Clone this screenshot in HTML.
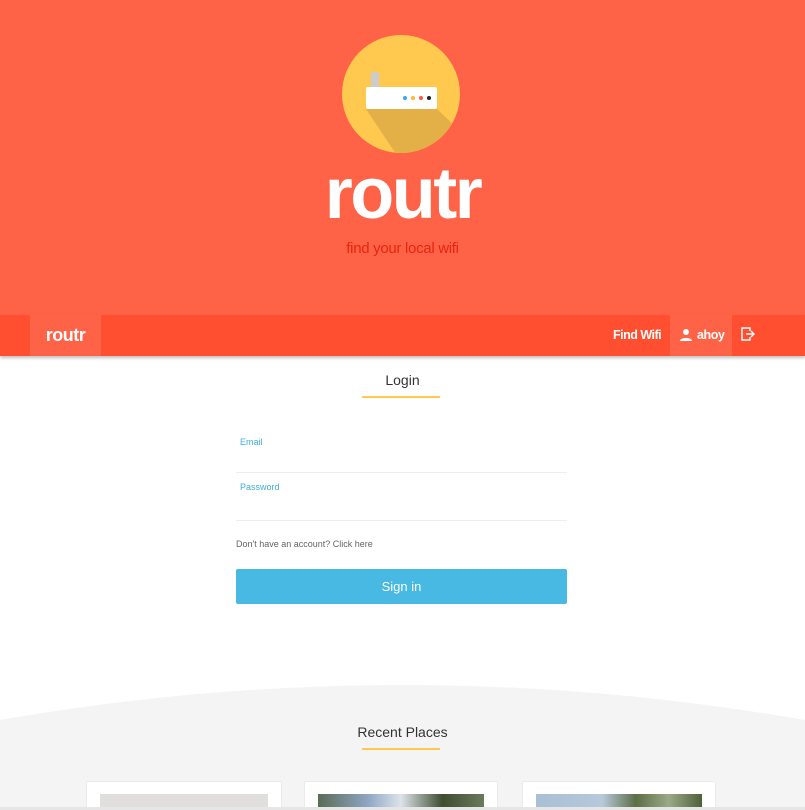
<!DOCTYPE html>
<html><head><style>
*{margin:0;padding:0;box-sizing:border-box}
html,body{width:805px;height:810px;overflow:hidden}
body{background:#fff;font-family:"Liberation Sans",sans-serif;position:relative}
.hero{position:absolute;left:0;top:0;width:805px;height:315px;background:#FF6347}
.title{position:absolute;left:0;width:805px;top:153px;text-align:center;color:#fff;font-weight:bold;font-size:72px;letter-spacing:-2.5px}
.sub{position:absolute;left:0;width:805px;top:240px;text-align:center;color:#E8250E;font-size:15px;letter-spacing:-0.3px}
.nav{position:absolute;left:0;top:315px;width:805px;height:41px;background:#FF4F30;box-shadow:0 2px 3px rgba(0,0,0,.25);color:#fff;font-weight:bold}
.brand{position:absolute;left:30px;top:0;width:71px;height:41px;background:#FF6347;text-align:center;line-height:41px;font-size:18px;letter-spacing:-0.5px}
.fw{position:absolute;left:613px;top:0;line-height:41px;font-size:12.5px;letter-spacing:-0.5px}
.ahoy{position:absolute;left:670px;top:0;width:62px;height:41px;background:#FF6347;line-height:41px;font-size:12.5px;padding-left:27px;letter-spacing:-0.4px}
.h2{position:absolute;left:0;width:805px;text-align:center;color:#333;font-size:14px}
.bar{position:absolute;left:362px;width:78px;height:2px;background:#FFC84F}
.lbl{position:absolute;left:240px;color:#3EAEDC;font-size:9px}
.line{position:absolute;left:236px;width:331px;height:1px;background:#eee}
.btn{position:absolute;left:236px;top:569px;width:331px;height:35px;background:#47B9E2;color:#fff;text-align:center;line-height:35px;font-size:13px;border-radius:2px}
.card{position:absolute;top:781px;height:26px;background:#fff;border:1px solid #eaeaea;border-bottom:none;border-radius:2px 2px 0 0;overflow:hidden}
.img{position:absolute;top:12px;left:13px;right:13px;height:40px}
</style></head><body>
<div class="hero">
<svg width="805" height="315" style="position:absolute;left:0;top:0">
<defs><clipPath id="c"><circle cx="401" cy="94" r="59"/></clipPath></defs>
<circle cx="401" cy="94" r="59" fill="#FFC84F"/>
<polygon points="366,109 437,109 480,150 420,170 400,160" fill="#E3B048" clip-path="url(#c)"/>
<rect x="371" y="72" width="8" height="18" rx="2" fill="#ccc"/>
<rect x="366" y="87" width="71" height="22" rx="2" fill="#fff"/>
<circle cx="405" cy="98" r="2" fill="#3AA9E0"/>
<circle cx="413" cy="98" r="2" fill="#FFB830"/>
<circle cx="421" cy="98" r="2" fill="#FF5A3A"/>
<circle cx="429" cy="98" r="2" fill="#222"/>
</svg>
<div class="title">routr</div>
<div class="sub">find your local wifi</div>
</div>
<div class="nav">
<div class="brand">routr</div>
<div class="fw">Find Wifi</div>
<div class="ahoy">ahoy</div>
<svg width="14" height="14" style="position:absolute;left:679px;top:13px" viewBox="0 0 14 14"><circle cx="7" cy="4" r="3" fill="#fff"/><path d="M1 13c0-4 12-4 12 0z" fill="#fff"/></svg>
<svg width="14" height="14" style="position:absolute;left:741px;top:12px" viewBox="0 0 14 14" fill="none" stroke="#fff" stroke-width="1.4"><path d="M9 4V1H1v12h8v-3M5 7h8M10 4l3 3-3 3"/></svg>
</div>
<div class="h2" style="top:372px">Login</div>
<div class="bar" style="top:396px"></div>
<div class="lbl" style="top:437px">Email</div>
<div class="line" style="top:472px"></div>
<div class="lbl" style="top:482px">Password</div>
<div class="line" style="top:520px"></div>
<div style="position:absolute;left:236px;top:539px;font-size:9px;color:#666">Don't have an account? Click here</div>
<div class="btn">Sign in</div>
<svg width="805" height="130" style="position:absolute;left:0;top:680px"><path d="M0 40 Q402 -30 805 40 V130 H0z" fill="#f4f4f4"/></svg>
<div class="h2" style="top:724px">Recent Places</div>
<div class="bar" style="top:748px"></div>
<div class="card" style="left:86px;width:196px"><div class="img" style="background:#e0dfdb"></div></div>
<div class="card" style="left:304px;width:194px"><div class="img" style="background:linear-gradient(90deg,#5a6b55,#8ea6c4 30%,#dde3ea 50%,#3d4d30 75%,#6a7a5a)"></div></div>
<div class="card" style="left:522px;width:194px"><div class="img" style="background:linear-gradient(90deg,#a9bfd6,#b7c9da 40%,#5b6e45 60%,#9aaa88 80%,#4e6038)"></div></div>
<div style="position:absolute;left:0;top:807px;width:805px;height:3px;background:#e6e6e6"></div>
</body></html>
